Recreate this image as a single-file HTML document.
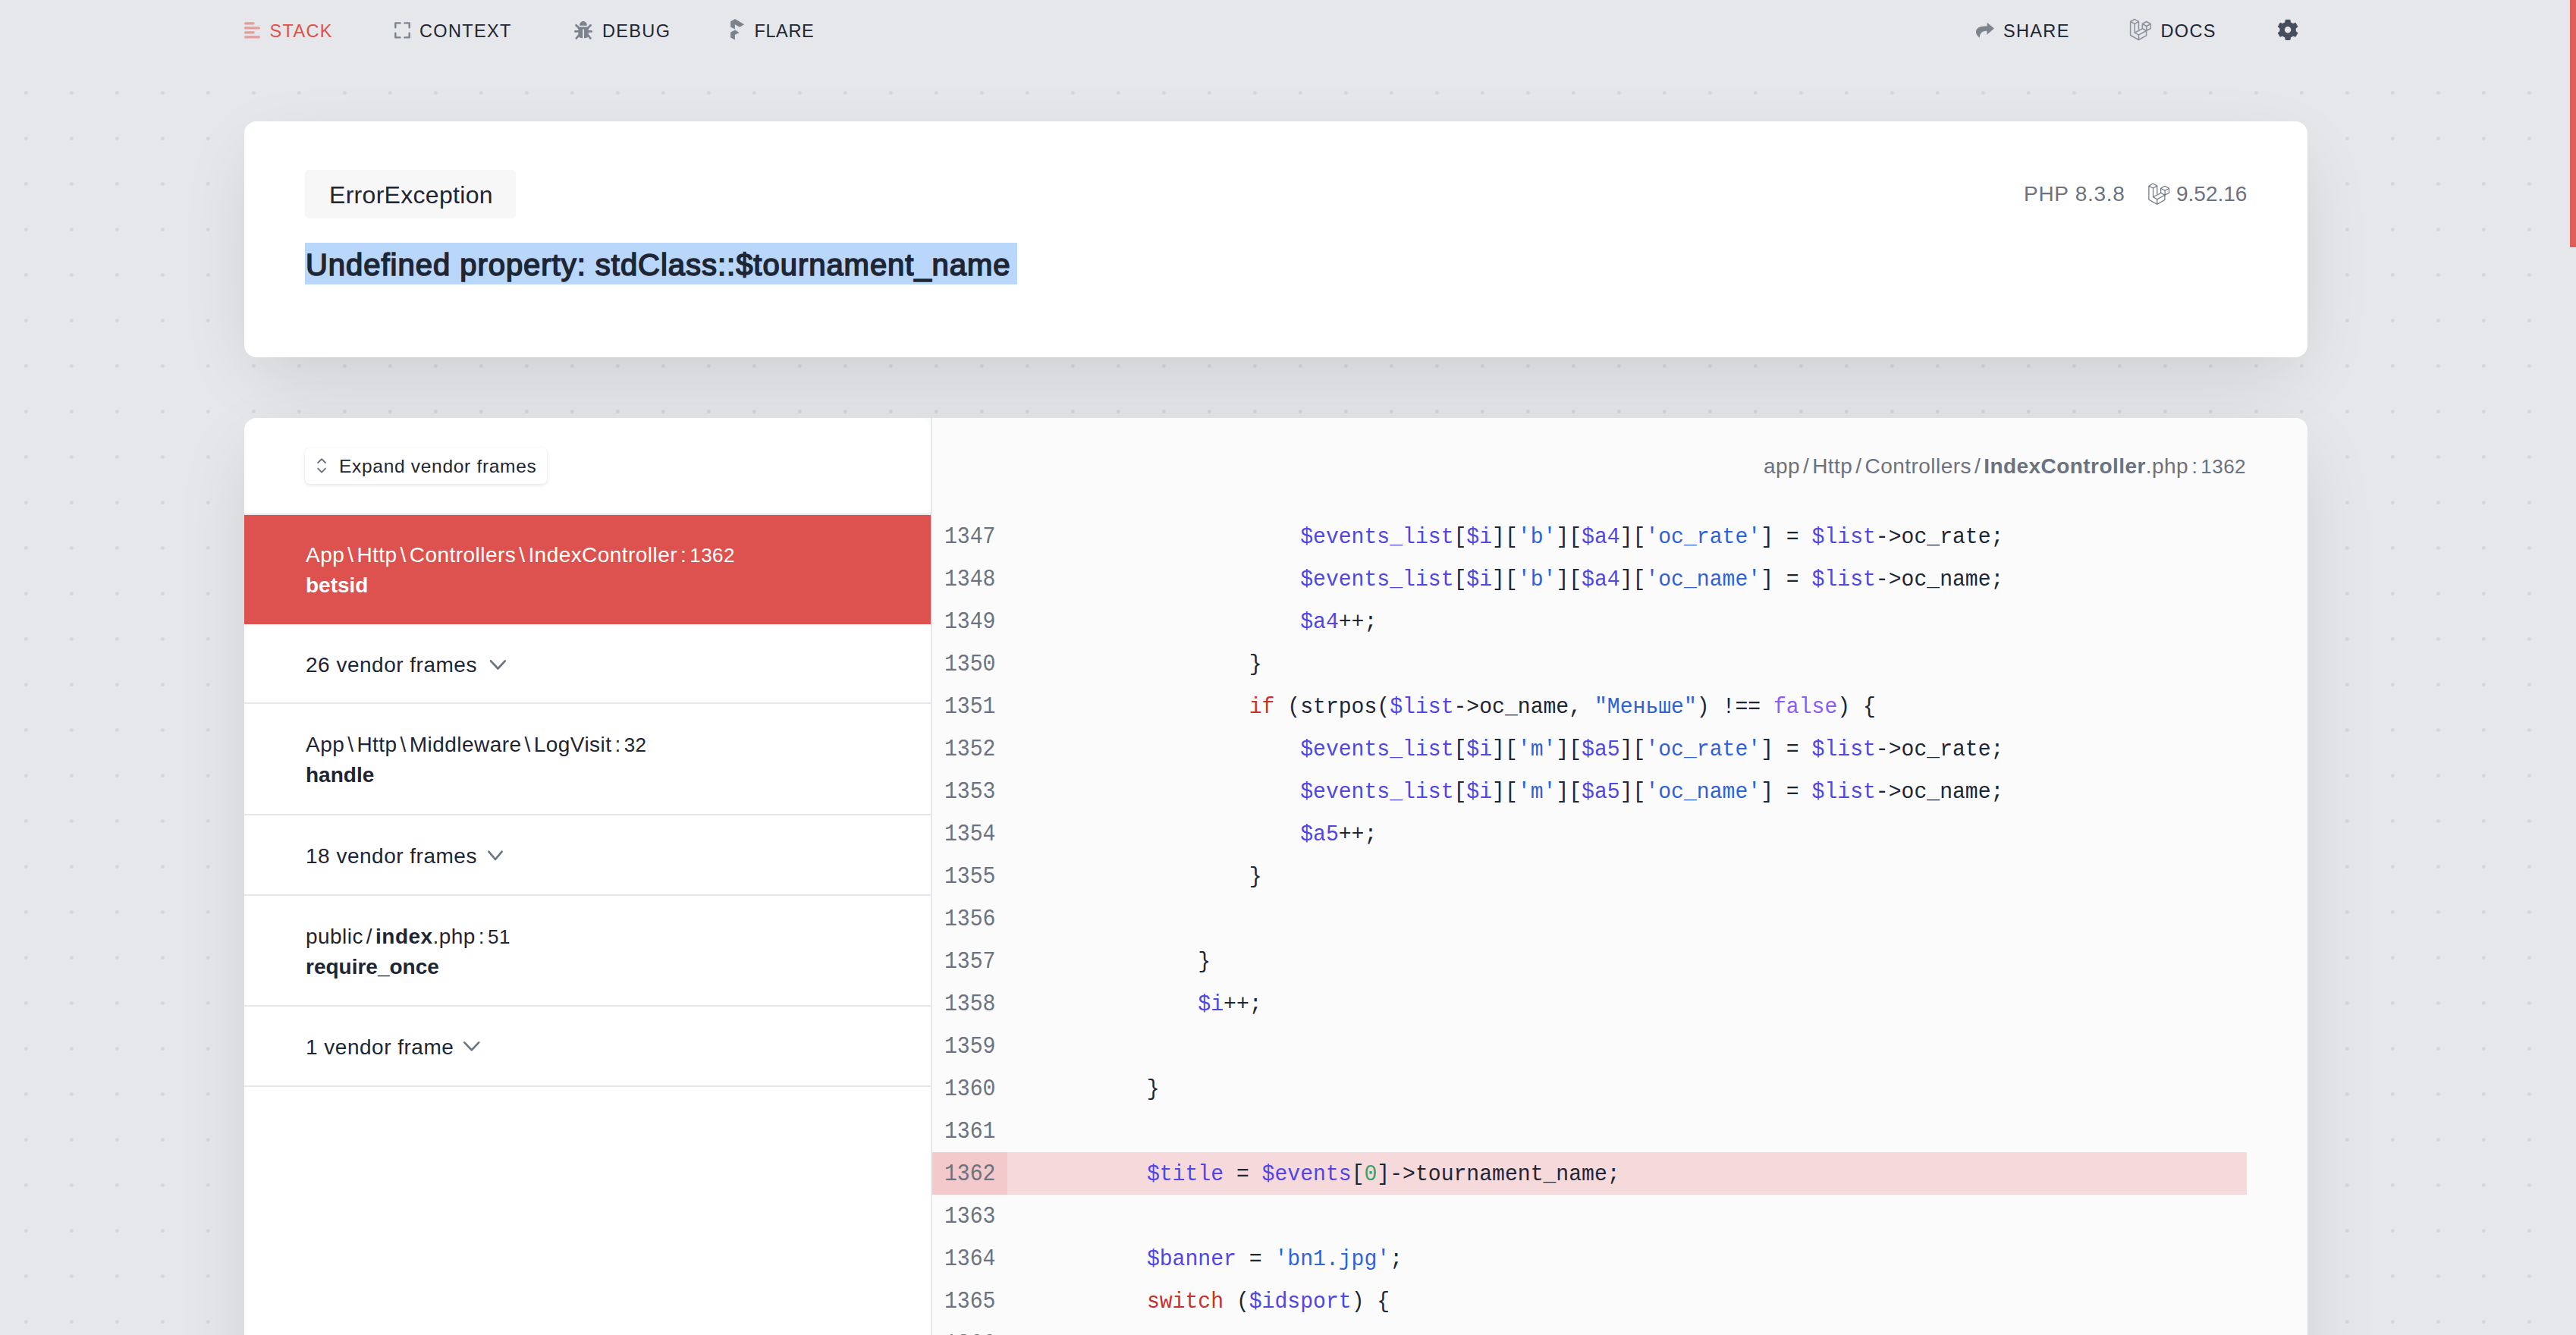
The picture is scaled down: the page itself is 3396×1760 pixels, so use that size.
<!DOCTYPE html>
<html>
<head>
<meta charset="utf-8">
<style>
*{box-sizing:border-box;margin:0;padding:0}
html,body{width:3396px;height:1760px;overflow:hidden}
body{position:relative;background-color:#e5e7eb;font-family:"Liberation Sans",sans-serif;color:#1f2937;
background-image:radial-gradient(circle at 34.4px 2.5px,#d5d7db 0,#d5d7db 1.9px,rgba(213,215,219,0) 3px);
background-size:60px 60px;background-position:0 0;}
.abs{position:absolute;white-space:pre}
#navbg{position:absolute;left:0;top:0;width:3396px;height:100px;background:#e5e7eb}
.nav{position:absolute;top:0.7px;height:80px;font-size:23.5px;line-height:80px;letter-spacing:1.35px;color:#1e2533;white-space:nowrap}
.card{position:absolute;background:#fff;border-radius:16px;box-shadow:0 30px 100px -18px rgba(0,0,0,.13)}
.fr1{font-size:28px;line-height:40px;height:40px;color:#1e2533;letter-spacing:0.45px}
.fr2{font-size:28px;line-height:40px;height:40px;font-weight:bold;color:#1e2533}
.ln{font-size:26px}
.sp{margin:0 4px}
.vf{letter-spacing:0.5px}
.ln2{font-size:25px}
.cl,.cc{font-family:"Liberation Mono",monospace;font-size:28.1px;line-height:56px;height:56px;padding-top:0.5px}
.cl{color:#6b7280;transform-origin:0 36px;transform:translateY(1px) scaleY(1.12)}
.cc{color:#1e2533;transform-origin:0 36px;transform:translateY(1.1px) scaleY(1.05)}
.v{color:#5046e5}.s{color:#2f62d7}.k{color:#c8312b}.l{color:#8b5cf6}.n{color:#38a169}
#scroll{position:absolute;left:3388px;top:0;width:8px;height:326px;background:#e05e58}
</style>
</head>
<body>
<div id="navbg"></div>
<!-- nav -->
<svg class="abs" style="left:0;top:0" width="1100" height="80" viewBox="0 0 1100 80">
  <g stroke="#e59c9b" stroke-width="3.4" stroke-linecap="round">
    <line x1="323.7" y1="30.9" x2="334" y2="30.9"/>
    <line x1="323.7" y1="36.9" x2="341.2" y2="36.9"/>
    <line x1="323.7" y1="42.9" x2="334" y2="42.9"/>
    <line x1="323.7" y1="48.9" x2="341.2" y2="48.9"/>
  </g>
</svg>
<div class="nav" id="n-stack" style="left:355.5px;color:#e04f49">STACK</div>
<div class="nav" id="n-context" style="left:553px">CONTEXT</div>
<div class="nav" id="n-debug" style="left:794px">DEBUG</div>
<div class="nav" id="n-flare" style="left:994.5px;letter-spacing:0.6px">FLARE</div>
<div class="nav" id="n-share" style="left:2641px">SHARE</div>
<div class="nav" id="n-docs" style="left:2848.5px">DOCS</div>


<svg class="abs" style="left:500px;top:0" width="600" height="80" viewBox="500 0 600 80">
  <g fill="none" stroke="#7d838d" stroke-width="2.4" stroke-linecap="round" stroke-linejoin="round">
    <path d="M521.3 36.2 V30.4 H527.5"/>
    <path d="M533.5 30.4 H539.7 V36.2"/>
    <path d="M521.3 43.6 V49.4 H527.5"/>
    <path d="M533.5 49.4 H539.7 V43.6"/>
  </g>
  <g fill="#7d838d">
    <path d="M764 33.8 C764 30.2 766 28 768.9 28 C771.8 28 773.8 30.2 773.8 33.8 Z"/>
    <path d="M762.4 37 Q762.4 35.4 764 35.4 L773.8 35.4 Q775.8 35.4 775.8 37 L775.8 46.5 Q775.8 50.2 770 50.3 L770 38.6 L768.2 38.6 L768.2 50.3 Q762.4 50.2 762.4 46.5 Z"/>
  </g>
  <g stroke="#7d838d" stroke-width="2.8" stroke-linecap="round">
    <line x1="758.4" y1="41.4" x2="763" y2="41.4"/><line x1="775.2" y1="41.4" x2="779.6" y2="41.4"/>
    <line x1="759.6" y1="33.3" x2="763.5" y2="37.2"/>
    <line x1="778.6" y1="33.3" x2="774.7" y2="37.2"/>
    <line x1="763" y1="46.5" x2="759.8" y2="50.5"/>
    <line x1="775.2" y1="46.5" x2="778.4" y2="50.5"/>
  </g>
  <g fill="#7d838d">
    <path d="M963.1 28.3 L969.1 25.1 L981.1 32.2 L975.3 35.8 L968.9 32.2 L968.9 38.6 L963.1 35.6 Z"/>
    <path d="M963.1 42.5 L969.1 39.5 L974.5 42.9 L968.9 46.1 L968.9 52.6 L963.1 49.6 Z"/>
  </g>
</svg>
<svg class="abs" style="left:2590px;top:0" width="460" height="80" viewBox="2590 0 460 80">
  <path fill="#7d838d" d="M2619.7 29.8 L2628.9 37.5 L2619.4 45.7 L2619.4 40.8 C2614 40.8 2610.5 42.5 2609.5 49.8 C2606.5 47.3 2604.8 44.5 2605 41.5 C2605.6 36.3 2610.5 34.5 2619.7 34.5 Z"/>
  <g fill="none" stroke="#8c919a" stroke-width="1.5" stroke-linejoin="round" transform="translate(2800 15)">
    <path d="M8.6 13.5 L14.0 10.3 L19.5 13.3 L14.2 16.3 Z"/>
    <path d="M8.6 13.5 V31.5 L19.5 37.5 L29.6 31.8 V25.5"/>
    <path d="M19.5 13.3 V24.3"/>
    <path d="M14.2 16.3 V28.1 L19.5 31.1 V37.5"/>
    <path d="M14.2 28.1 L24.0 23.0 M19.5 31.1 L29.6 25.5"/>
    <path d="M24.3 16.5 L29.6 13.5 L35.2 16.5 L29.8 19.5 Z"/>
    <path d="M24.3 16.5 V22.5 L29.6 25.5 L35.2 22.5 V16.5 M29.8 19.5 V25.5"/>
  </g>
  <path fill="#474e5b" fill-rule="evenodd" d="M3012.23 29.22 L3012.95 25.66 L3019.25 25.66 L3019.97 29.22 L3022.90 30.91 L3026.34 29.75 L3029.49 35.21 L3026.77 37.61 L3026.77 40.99 L3029.49 43.39 L3026.34 48.85 L3022.90 47.69 L3019.97 49.38 L3019.25 52.94 L3012.95 52.94 L3012.23 49.38 L3009.30 47.69 L3005.86 48.85 L3002.71 43.39 L3005.43 40.99 L3005.43 37.61 L3002.71 35.21 L3005.86 29.75 L3009.30 30.91 Z M3020.30 39.3 A4.2 4.2 0 1 0 3011.90 39.3 A4.2 4.2 0 1 0 3020.30 39.3 Z"/>
</svg>

<div class="abs" style="left:3388px;top:0;width:8px;height:1760px;background:#e5e7eb"></div>
<div id="scroll"></div>

<!-- card 1 -->
<div class="card" id="card1" style="left:322px;top:160px;width:2720px;height:311px"></div>
<div class="abs" style="left:402px;top:224px;width:278px;height:64px;background:#f7f7f8;border-radius:5px"></div>
<div class="abs" id="t-exc" style="left:434px;top:224.5px;letter-spacing:0.3px;height:64px;line-height:64px;font-size:32px;color:#1e2533">ErrorException</div>
<div class="abs" style="left:402px;top:320px;width:939px;height:55px;background:#b9d6fb"></div>
<div class="abs" id="t-head" style="left:403px;top:322px;letter-spacing:0.97px;height:55px;line-height:55px;font-size:40px;font-weight:normal;-webkit-text-stroke:1.6px #1e2533;color:#1e2533">Undefined property: stdClass::$tournament_name</div>
<div class="abs" id="t-php" style="left:2668px;letter-spacing:0.7px;top:236px;height:40px;line-height:40px;font-size:28px;color:#6b7280">PHP 8.3.8</div>
<svg class="abs" style="left:2829px;top:236px" width="36" height="36" viewBox="0 0 36 36">
  <g fill="none" stroke="#6b7280" stroke-width="1.2" stroke-linejoin="round" transform="translate(-4.7 -4.3) scale(1.0)">
    <path d="M8.6 13.5 L14.0 10.3 L19.5 13.3 L14.2 16.3 Z"/>
    <path d="M8.6 13.5 V31.5 L19.5 37.5 L29.6 31.8 V25.5"/>
    <path d="M19.5 13.3 V24.3"/>
    <path d="M14.2 16.3 V28.1 L19.5 31.1 V37.5"/>
    <path d="M14.2 28.1 L24.0 23.0 M19.5 31.1 L29.6 25.5"/>
    <path d="M24.3 16.5 L29.6 13.5 L35.2 16.5 L29.8 19.5 Z"/>
    <path d="M24.3 16.5 V22.5 L29.6 25.5 L35.2 22.5 V16.5 M29.8 19.5 V25.5"/>
  </g>
</svg>
<div class="abs" id="t-ver" style="left:2869px;top:236px;height:40px;line-height:40px;font-size:28px;color:#6b7280">9.52.16</div>


<!-- card 2 -->
<div class="card" id="card2" style="left:322px;top:551px;width:2720px;height:1400px;overflow:hidden"></div>
<div class="abs" style="left:1229px;top:551px;width:1813px;height:1209px;background:#fbfbfb;border-top-right-radius:16px"></div>
<div class="abs" style="left:1211px;top:551px;width:16px;height:16px;background:radial-gradient(circle at 0 16px,#fff 15.5px,#fbfbfb 16.5px)"></div>
<div class="abs" style="left:1227px;top:551px;width:2px;height:1209px;background:#e5e7eb"></div>
<div class="abs" style="left:322px;top:677px;width:905px;height:2px;background:#e5e7eb"></div>
<!-- expand button -->
<div class="abs" style="left:402px;top:590px;width:319px;height:48px;background:#fff;border-radius:6px;box-shadow:0 2px 5px rgba(0,0,0,.09),0 0 1px rgba(0,0,0,.12)"></div>
<svg class="abs" style="left:410px;top:598px" width="30" height="32" viewBox="410 598 30 32">
  <g fill="none" stroke="#6b7280" stroke-width="1.9" stroke-linecap="round" stroke-linejoin="round">
    <path d="M419.2 610 L424.1 605.2 L429 610"/>
    <path d="M419.2 617.6 L424.1 622.6 L429 617.6"/>
  </g>
</svg>
<div class="abs" id="t-expand" style="left:447px;top:591px;height:48px;line-height:48px;font-size:24.5px;letter-spacing:0.7px;color:#1e2533">Expand vendor frames</div>
<!-- frames -->
<div class="abs" style="left:322px;top:679px;width:905px;height:144px;background:#dd524e"></div>
<div class="abs fr1" id="t-f1a" style="left:403px;top:711.5px;color:#fff">App<span class="sp">\</span>Http<span class="sp">\</span>Controllers<span class="sp">\</span>IndexController<span class="sp">:</span><span class="ln">1362</span></div>
<div class="abs fr2" id="t-f1b" style="left:403px;top:751.5px;color:#fff">betsid</div>
<div class="abs fr1 vf" id="t-v1" style="left:403px;top:856.5px">26 vendor frames</div>
<div class="abs" style="left:322px;top:926px;width:905px;height:2px;background:#e5e7eb"></div>
<div class="abs fr1" id="t-f2a" style="left:403px;top:961.5px">App<span class="sp">\</span>Http<span class="sp">\</span>Middleware<span class="sp">\</span>LogVisit<span class="sp">:</span><span class="ln">32</span></div>
<div class="abs fr2" id="t-f2b" style="left:403px;top:1001.5px">handle</div>
<div class="abs" style="left:322px;top:1073px;width:905px;height:2px;background:#e5e7eb"></div>
<div class="abs fr1 vf" id="t-v2" style="left:403px;top:1108.5px">18 vendor frames</div>
<div class="abs" style="left:322px;top:1179px;width:905px;height:2px;background:#e5e7eb"></div>
<div class="abs fr1" id="t-f3a" style="left:403px;top:1215px">public<span class="sp">/</span><b>index</b>.php<span class="sp">:</span><span class="ln">51</span></div>
<div class="abs fr2" id="t-f3b" style="left:403px;top:1255px">require_once</div>
<div class="abs" style="left:322px;top:1325px;width:905px;height:2px;background:#e5e7eb"></div>
<div class="abs fr1 vf" id="t-v3" style="left:403px;top:1360.5px">1 vendor frame</div>
<div class="abs" style="left:322px;top:1431px;width:905px;height:2px;background:#e5e7eb"></div>
<svg class="abs" style="left:0;top:0" width="1229" height="1760" viewBox="0 0 1229 1760">
  <g fill="none" stroke="#6b7280" stroke-width="2.6" stroke-linecap="round" stroke-linejoin="round">
    <path d="M647 871.3 L656.4 881.5 L665.8 871.3"/>
    <path d="M644.3 1122.7 L653 1133 L661.7 1122.7"/>
    <path d="M612.3 1374.3 L621.8 1384.4 L631.2 1374.3"/>
  </g>
</svg>
<!-- code header -->
<div class="abs" id="t-path" style="right:435px;top:595px;height:40px;line-height:40px;font-size:28px;letter-spacing:0.45px;color:#6b7280">app<span class="sp">/</span>Http<span class="sp">/</span>Controllers<span class="sp">/</span><b>IndexController</b>.php<span class="sp">:</span><span class="ln">1362</span></div>


<!-- code -->
<div class="abs" style="left:1229px;top:1519px;width:1733px;height:56px;background:#f6d9db"></div>
<div class="abs" style="left:1229px;top:1519px;width:99px;height:56px;background:#f3c9cb"></div>
<div class="abs cl" style="top:679px;left:1245px">1347</div><div class="abs cc" style="top:679px;left:1377px">                    <span class="v">$events_list</span>[<span class="v">$i</span>][<span class="s">'b'</span>][<span class="v">$a4</span>][<span class="s">'oc_rate'</span>] = <span class="v">$list</span>-&gt;oc_rate;</div>
<div class="abs cl" style="top:735px;left:1245px">1348</div><div class="abs cc" style="top:735px;left:1377px">                    <span class="v">$events_list</span>[<span class="v">$i</span>][<span class="s">'b'</span>][<span class="v">$a4</span>][<span class="s">'oc_name'</span>] = <span class="v">$list</span>-&gt;oc_name;</div>
<div class="abs cl" style="top:791px;left:1245px">1349</div><div class="abs cc" style="top:791px;left:1377px">                    <span class="v">$a4</span>++;</div>
<div class="abs cl" style="top:847px;left:1245px">1350</div><div class="abs cc" style="top:847px;left:1377px">                }</div>
<div class="abs cl" style="top:903px;left:1245px">1351</div><div class="abs cc" style="top:903px;left:1377px">                <span class="k">if</span> (strpos(<span class="v">$list</span>-&gt;oc_name, <span class="s">"Меньше"</span>) !== <span class="l">false</span>) {</div>
<div class="abs cl" style="top:959px;left:1245px">1352</div><div class="abs cc" style="top:959px;left:1377px">                    <span class="v">$events_list</span>[<span class="v">$i</span>][<span class="s">'m'</span>][<span class="v">$a5</span>][<span class="s">'oc_rate'</span>] = <span class="v">$list</span>-&gt;oc_rate;</div>
<div class="abs cl" style="top:1015px;left:1245px">1353</div><div class="abs cc" style="top:1015px;left:1377px">                    <span class="v">$events_list</span>[<span class="v">$i</span>][<span class="s">'m'</span>][<span class="v">$a5</span>][<span class="s">'oc_name'</span>] = <span class="v">$list</span>-&gt;oc_name;</div>
<div class="abs cl" style="top:1071px;left:1245px">1354</div><div class="abs cc" style="top:1071px;left:1377px">                    <span class="v">$a5</span>++;</div>
<div class="abs cl" style="top:1127px;left:1245px">1355</div><div class="abs cc" style="top:1127px;left:1377px">                }</div>
<div class="abs cl" style="top:1183px;left:1245px">1356</div><div class="abs cc" style="top:1183px;left:1377px"></div>
<div class="abs cl" style="top:1239px;left:1245px">1357</div><div class="abs cc" style="top:1239px;left:1377px">            }</div>
<div class="abs cl" style="top:1295px;left:1245px">1358</div><div class="abs cc" style="top:1295px;left:1377px">            <span class="v">$i</span>++;</div>
<div class="abs cl" style="top:1351px;left:1245px">1359</div><div class="abs cc" style="top:1351px;left:1377px"></div>
<div class="abs cl" style="top:1407px;left:1245px">1360</div><div class="abs cc" style="top:1407px;left:1377px">        }</div>
<div class="abs cl" style="top:1463px;left:1245px">1361</div><div class="abs cc" style="top:1463px;left:1377px"></div>
<div class="abs cl" style="top:1519px;left:1245px">1362</div><div class="abs cc" style="top:1519px;left:1377px">        <span class="v">$title</span> = <span class="v">$events</span>[<span class="n">0</span>]-&gt;tournament_name;</div>
<div class="abs cl" style="top:1575px;left:1245px">1363</div><div class="abs cc" style="top:1575px;left:1377px"></div>
<div class="abs cl" style="top:1631px;left:1245px">1364</div><div class="abs cc" style="top:1631px;left:1377px">        <span class="v">$banner</span> = <span class="s">'bn1.jpg'</span>;</div>
<div class="abs cl" style="top:1687px;left:1245px">1365</div><div class="abs cc" style="top:1687px;left:1377px">        <span class="k">switch</span> (<span class="v">$idsport</span>) {</div>
<div class="abs cl" style="top:1743px;left:1245px">1366</div><div class="abs cc" style="top:1743px;left:1377px">            <span class="k">case</span> <span class="n">1</span>:</div>
<script>(function(){var w=window.innerWidth;if(w&&Math.abs(w-3396)>2){document.documentElement.style.zoom=(w/3396);}})();</script>
</body>
</html>
